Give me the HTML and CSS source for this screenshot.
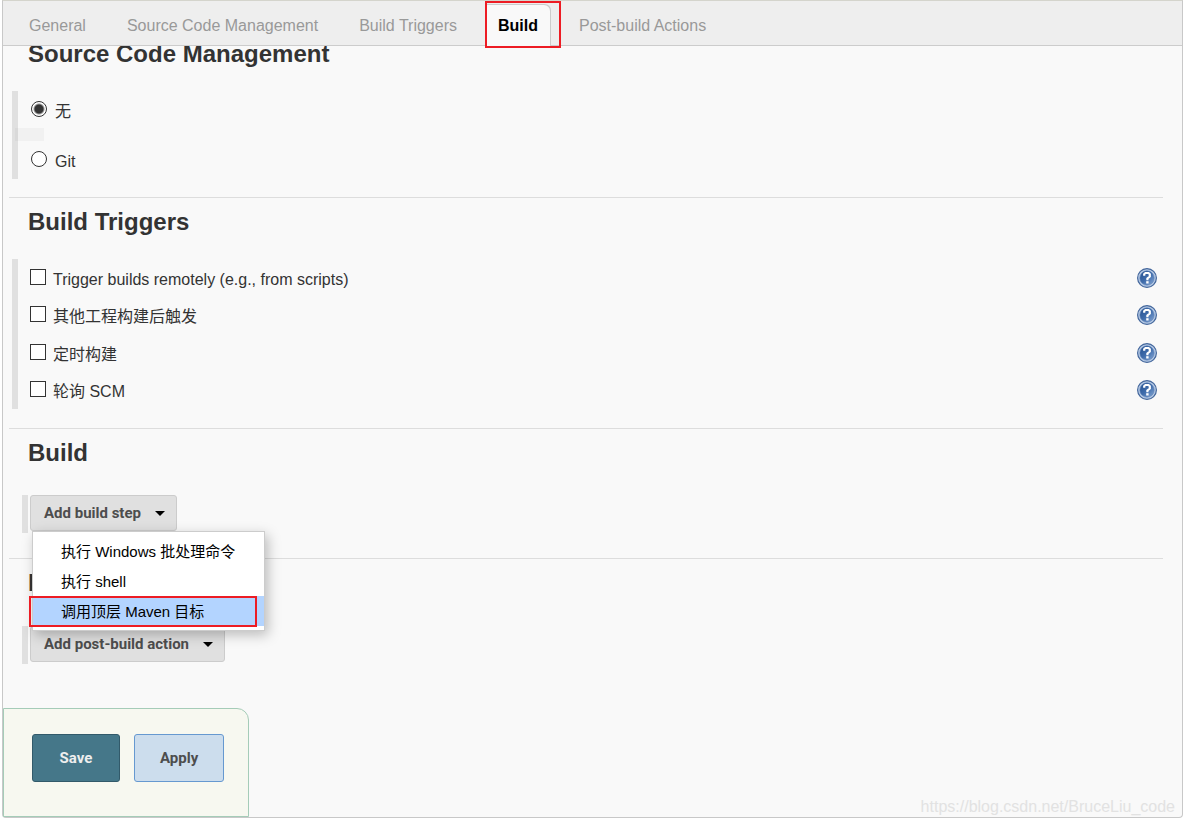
FILE: index.html
```html
<!DOCTYPE html>
<html lang="zh-CN">
<head>
<meta charset="utf-8">
<title>Build configuration</title>
<link rel="stylesheet" href="styles.css">
</head>
<body>
<svg class="defs" aria-hidden="true">
  <defs>
    <linearGradient id="help-fill" x1="0" y1="0" x2="1" y2="1">
      <stop offset="0" stop-color="#24508f"/>
      <stop offset="0.5" stop-color="#3f6cab"/>
      <stop offset="1" stop-color="#88a9d6"/>
    </linearGradient>
    <symbol id="help" viewBox="0 0 20 20">
      <circle cx="10" cy="10" r="9.4" fill="#b7cbe6" stroke="#44679c" stroke-width="1.2"/>
      <circle cx="10" cy="10" r="7.2" fill="url(#help-fill)" stroke="#5c80b5" stroke-width=".6"/>
      <path d="M7.200 7.700V6.200L8.500 5H11.500L12.800 6.200V8.500L10.400 10.500V12.300" fill="none" stroke="#fff" stroke-width="2.200"/>
      <rect x="9.200" y="13.200" width="2.400" height="2.300" fill="#fff"/>
    </symbol>
  </defs>
</svg>
<main class="panel">
  <nav class="tabs">
    <a class="tab" href="#general">General</a>
    <a class="tab" href="#scm">Source Code Management</a>
    <a class="tab" href="#triggers">Build Triggers</a>
    <a class="tab tab-active" href="#build">Build</a>
    <a class="tab" href="#post">Post-build Actions</a>
  </nav>
  <form class="config">
    <section class="section section-first" id="scm">
      <h2 class="title">Source Code Management</h2>
      <div class="group">
        <div class="row"><input class="radio" type="radio" name="scm" id="scm-none" checked><label class="radio-label" for="scm-none">无</label></div>
        <div class="divider"></div>
        <div class="row"><input class="radio" type="radio" name="scm" id="scm-git"><label class="radio-label" for="scm-git">Git</label></div>
      </div>
    </section>
    <section class="section" id="triggers">
      <h2 class="title">Build Triggers</h2>
      <div class="group group-checks">
        <div class="row"><input class="check" type="checkbox" id="t1"><label class="check-label" for="t1">Trigger builds remotely (e.g., from scripts)</label><button class="help" type="button" aria-label="Help"><svg class="help-icon"><use href="#help"/></svg></button></div>
        <div class="row"><input class="check" type="checkbox" id="t2"><label class="check-label" for="t2">其他工程构建后触发</label><button class="help" type="button" aria-label="Help"><svg class="help-icon"><use href="#help"/></svg></button></div>
        <div class="row"><input class="check" type="checkbox" id="t3"><label class="check-label" for="t3">定时构建</label><button class="help" type="button" aria-label="Help"><svg class="help-icon"><use href="#help"/></svg></button></div>
        <div class="row"><input class="check" type="checkbox" id="t4"><label class="check-label" for="t4">轮询 SCM</label><button class="help" type="button" aria-label="Help"><svg class="help-icon"><use href="#help"/></svg></button></div>
      </div>
    </section>
    <section class="section section-action" id="build">
      <h2 class="title">Build</h2>
      <div class="step">
        <button class="menu-button" type="button">Add build step<span class="caret"></span></button>
        <div class="menu">
          <button class="menu-item" type="button">执行 Windows 批处理命令</button>
          <button class="menu-item" type="button">执行 shell</button>
          <button class="menu-item menu-item-active" type="button">调用顶层 Maven 目标</button>
        </div>
      </div>
    </section>
    <section class="section section-action" id="post">
      <h2 class="title">Post-build Actions</h2>
      <div class="step">
        <button class="menu-button" type="button">Add post-build action<span class="caret"></span></button>
      </div>
    </section>
    <div class="footer">
      <button class="button button-save" type="button">Save</button>
      <button class="button button-apply" type="button">Apply</button>
    </div>
  </form>
  <span class="watermark">https://blog.csdn.net/BruceLiu_code</span>
</main>
</body>
</html>
```
FILE: styles.css
```css
* { box-sizing: border-box; }

body {
  margin: 0;
  background: #fff;
  color: #333;
  font: 16px/20px "Liberation Sans", "Noto Sans CJK SC", sans-serif;
}

button { font-family: inherit; }

.defs { position: absolute; width: 0; height: 0; }

.panel {
  position: relative;
  margin: 0 1px 0 2px;
  background: #f9f9f9;
  border: 1px solid #c8c8c8;
  border-top-color: #d4d4cc;
  border-radius: 0 0 4px 4px;
}

.tabs {
  position: relative;
  z-index: 1;
  display: flex;
  gap: 15px;
  height: 45px;
  padding: 3px 13px 0;
  background: #eee;
  border-bottom: 1px solid #ccc;
}

.tab {
  padding: 0 13px;
  color: #999;
  line-height: 44px;
  text-decoration: none;
  white-space: nowrap;
}

.tab-active {
  position: relative;
  height: 42px;
  background: #f9f9f9;
  border-radius: 0 6px 0 0;
  box-shadow: inset -1px 1px 0 #ccc;
  color: #000;
  font-weight: bold;
}

.tab-active::after {
  content: "";
  position: absolute;
  inset: -3px -10px -2px 0;
  border: 2px solid #ed1c24;
}

.section {
  margin: 0 19px 0 6px;
  padding: 10px 0 19px;
  border-top: 1px solid #ddd;
}

.section-first {
  margin-top: -6px;
  padding: 0 0 18px;
  border-top: 0;
}

.section-action { padding-bottom: 25px; }

.section-action + .section-action { padding-top: 10px; }

.title {
  margin: 0 0 23px 19px;
  font-size: 24px;
  line-height: 28px;
}

.section-action .title { margin-bottom: 28px; }

.section-action + .section-action .title { margin-bottom: 29px; }

.group {
  margin-left: 3px;
  padding-right: 6px;
  border-left: 6px solid #e0e0e0;
}

.group-checks {
  display: grid;
  grid-template-rows: repeat(4, 1fr);
  min-height: 150px;
}

.row {
  display: flex;
  align-items: center;
  min-height: 37px;
  padding-left: 12px;
}

.section-first .group { padding-bottom: 1px; }

.divider {
  width: 29px;
  height: 13px;
  margin-left: -3px;
  background: rgba(0, 0, 0, 0.03);
}

.radio,
.check {
  flex: none;
  appearance: none;
  width: 16px;
  height: 16px;
  margin: 0 0 2px;
  background: #fff;
  border: 1px solid #333;
}

.radio {
  margin-left: 1px;
  border-radius: 50%;
}

.radio:checked { background: radial-gradient(circle, #333 4px, #fff 6px); }

.radio-label { padding: 4px 0 0 8px; }

.check-label {
  flex: 1;
  padding: 4px 0 0 7px;
}

.help {
  display: flex;
  padding: 0;
  background: none;
  border: 0;
}

.help-icon { width: 20px; height: 20px; }

.step {
  position: relative;
  margin-left: 13px;
  padding: 0 0 2px 2px;
  border-left: 6px solid #e0e0e0;
}

.menu-button {
  display: flex;
  align-items: center;
  gap: 14px;
  height: 36px;
  padding: 0 11px 0 13px;
  background: #e0e0e0;
  border: 1px solid #ccc;
  border-radius: 3px;
  color: #4d4d4d;
  font: bold 15px/20px Roboto, "Liberation Sans", sans-serif;
}

.caret {
  border: 5px solid transparent;
  border-top-color: #000;
  border-bottom: 0;
}

.menu {
  position: absolute;
  z-index: 2;
  top: 36px;
  left: 4px;
  width: 233px;
  padding: 4px 0;
  background: #fff;
  border: 1px solid #ccc;
  box-shadow: 3px 4px 12px rgba(0, 0, 0, 0.25);
}

.menu-item {
  display: block;
  position: relative;
  width: 100%;
  height: 30px;
  padding: 0 28px 2px;
  background: none;
  border: 0;
  color: #000;
  font-size: 15px;
  text-align: left;
  white-space: nowrap;
}

.menu-item-active { background: #b3d4ff; }

.menu-item-active::after {
  content: "";
  position: absolute;
  inset: 0 7px -1px -4px;
  border: 2px solid #ed1c24;
}

.footer {
  display: flex;
  gap: 14px;
  width: fit-content;
  margin-top: 19px;
  padding: 25px 24px 34px 28px;
  background: #f7f8f0;
  border: 1px solid #a5ccb8;
  border-radius: 0 12px 0 0;
}

.button {
  min-width: 88px;
  height: 48px;
  padding: 0 25px;
  border: 1px solid #325a6a;
  border-radius: 3px;
  font: bold 15px/20px Roboto, "Liberation Sans", sans-serif;
}

.button-save { background: #457789; color: #eee; }

.button-apply {
  background: #ccdded;
  border-color: #6699d0;
  color: #4d4d4d;
}

.watermark {
  position: absolute;
  right: 7px;
  bottom: 0;
  color: #e2e2e2;
}
```
